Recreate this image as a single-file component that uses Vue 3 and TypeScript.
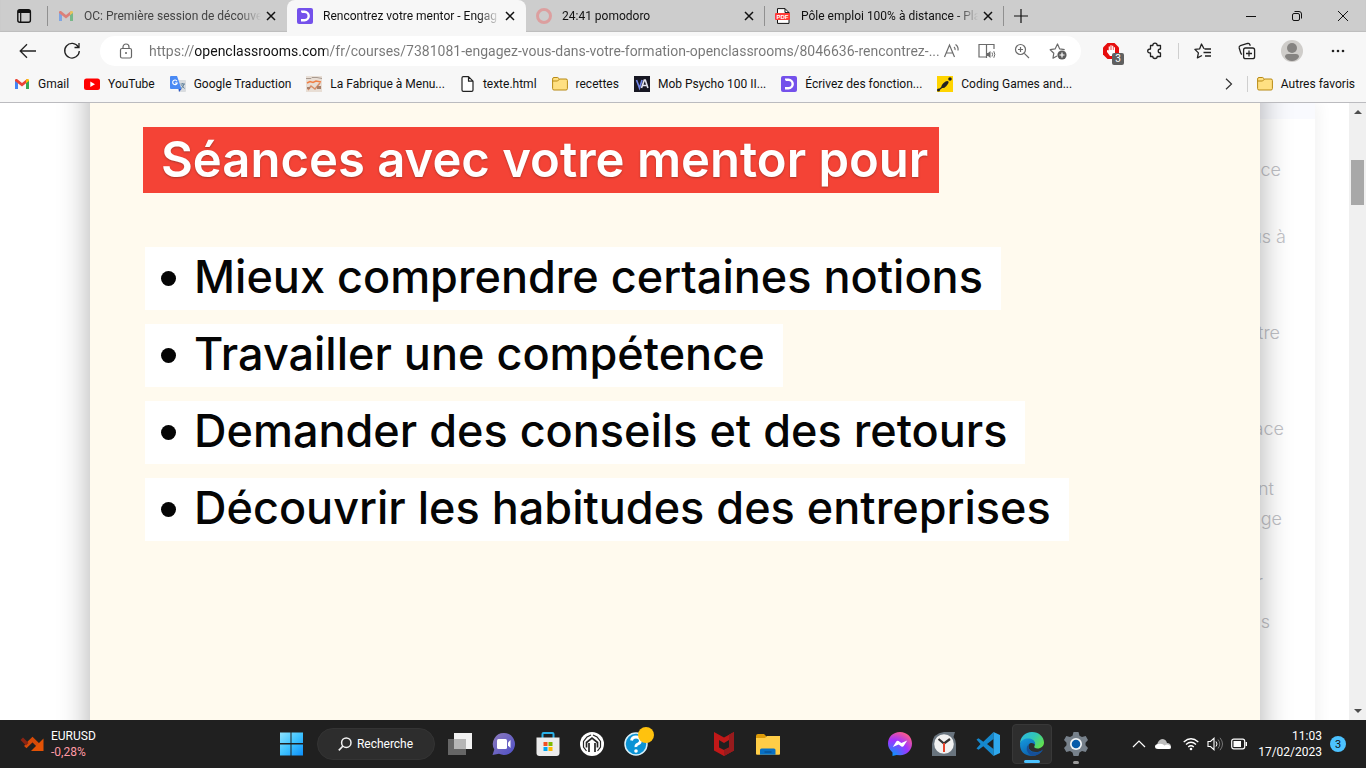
<script setup lang="ts">
import { ref } from 'vue'

interface Tab { title: string; icon: string; active?: boolean; faded?: boolean; sep?: boolean }
const tabs: Tab[] = [
  { title: 'OC: Première session de découve', icon: 'gmail', faded: true },
  { title: 'Rencontrez votre mentor - Engag', icon: 'oc', active: true },
  { title: '24:41 pomodoro', icon: 'ring', sep: true },
  { title: 'Pôle emploi 100% à distance - Pla', icon: 'pdf', sep: true },
]

const address = ref('https://openclassrooms.com/fr/courses/7381081-engagez-vous-dans-votre-formation-openclassrooms/8046636-rencontrez-...')

const favourites = [
  { label: 'Gmail', icon: 'gmail' },
  { label: 'YouTube', icon: 'youtube' },
  { label: 'Google Traduction', icon: 'translate' },
  { label: 'La Fabrique à Menu...', icon: 'menu' },
  { label: 'texte.html', icon: 'file' },
  { label: 'recettes', icon: 'folder' },
  { label: 'Mob Psycho 100 II...', icon: 'va' },
  { label: 'Écrivez des fonction...', icon: 'oc' },
  { label: 'Coding Games and...', icon: 'coding' },
]

const points = [
  'Mieux comprendre certaines notions',
  'Travailler une compétence',
  'Demander des conseils et des retours',
  'Découvrir les habitudes des entreprises',
]

const lesson = [
  { text: 'ce', before: 0, inset: 34 },
  { text: 'us à', before: 37, inset: 29 },
  { text: 'tre', before: 66, inset: 35 },
  { text: 'ace', before: 66, inset: 31 },
  { text: 'nt', before: 30, inset: 41 },
  { text: 'nge', before: 0, inset: 33 },
  { text: 'r', before: 33, inset: 52 },
  { text: 's', before: 10, inset: 45 },
]
</script>

<template>
  <div class="screen">
    <header class="browser">
      <div class="tabstrip">
        <button class="tabmenu" aria-label="Menu des onglets">
          <svg width="16" height="16" viewBox="0 0 16 16"><rect x="1.8" y="1.8" width="12.6" height="12.4" rx="2" fill="none" stroke="#111" stroke-width="1.4" /><path d="M2 2h12v3H2z" fill="#111" /><path d="M4.7 5v9" stroke="#111" stroke-width="1.2" /></svg>
        </button>
        <div v-for="t in tabs" :key="t.title" class="tab" :class="{ active: t.active, faded: t.faded, sep: t.sep }">
          <svg v-if="t.icon === 'gmail'" class="tabicon" width="16" height="16" viewBox="0 0 16 16"><path d="M1 4v9h3V7z" fill="#4285f4" /><path d="M12 7v6h3V4z" fill="#34a853" /><path d="M1 4.2Q1 2.500 3 3l5 4 5-4v3.600L8 10.500 1 5z" fill="#ea4335" /><path d="M12 4l1-1q2-.5 2 1.200V5l-3 2z" fill="#fbbc04" /></svg>
          <svg v-else-if="t.icon === 'oc'" class="tabicon" width="16" height="16" viewBox="0 0 16 16"><rect width="16" height="16" rx="2" fill="#7451eb" /><path d="M4 3.800h3.500a4.200 4.200 0 0 1 0 8.400H4" fill="none" stroke="#fff" stroke-width="2.400" /><path d="M3 2l3.500 5.500H3z" fill="#7451eb" /></svg>
          <svg v-else-if="t.icon === 'ring'" class="tabicon" width="16" height="16" viewBox="0 0 16 16"><circle cx="8" cy="8" r="6.500" fill="none" stroke="#dc9f9f" stroke-width="3" /></svg>
          <svg v-else class="tabicon" width="16" height="16" viewBox="0 0 16 16"><path d="M2.500.6h7.500l4 4v10.800H2.500z" fill="#fff" stroke="#111" /><path d="M10 .6v4h4" fill="none" stroke="#111" /><rect x="0" y="5" width="15" height="7" rx="1" fill="#ff3b36" /><text x="7.500" y="10.700" text-anchor="middle" font-family="Liberation Sans" font-weight="700" font-size="6" fill="#fff">PDF</text></svg>
          <span class="tabtitle">{{ t.title }}</span>
          <button class="close" aria-label="Fermer l’onglet"><svg width="10" height="10" viewBox="0 0 10 10"><path d="M1 1l8 8M9 1L1 9" stroke="#111" stroke-width="1.500" /></svg></button>
        </div>
        <button class="newtab" aria-label="Nouvel onglet"><svg width="14" height="14" viewBox="0 0 14 14"><path d="M7 0v14M0 7h14" stroke="#111" stroke-width="1.200" /></svg></button>
        <div class="winctl">
          <button aria-label="Réduire"><svg width="10" height="10" viewBox="0 0 10 10"><path d="M0 5.500h10" stroke="#111" /></svg></button>
          <button aria-label="Restaurer"><svg width="10" height="10" viewBox="0 0 10 10"><rect x=".5" y="2.500" width="7" height="7" rx="1.500" fill="none" stroke="#111" /><path d="M2.500.5H7Q9.500.5 9.500 3v4.500" fill="none" stroke="#111" /></svg></button>
          <button aria-label="Fermer"><svg width="10" height="10" viewBox="0 0 10 10"><path d="M0 0l10 10M10 0L0 10" stroke="#111" /></svg></button>
        </div>
      </div>

      <div class="toolbar">
        <button class="tool nav" aria-label="Précédent"><svg width="18" height="16" viewBox="0 0 18 16"><path d="M17 8H1.500M8 1.200L1.200 8 8 14.800" fill="none" stroke="#222" stroke-width="1.300" /></svg></button>
        <button class="tool nav" aria-label="Actualiser"><svg width="18" height="18" viewBox="0 0 18 18"><path d="M15.300 5A7.300 7.300 0 1 0 16.300 9M16 1v4.500h-4.500" fill="none" stroke="#222" stroke-width="1.300" /></svg></button>
        <div class="addressbar">
          <svg class="lock" width="14" height="16" viewBox="0 0 14 16"><rect x="1.500" y="5.500" width="11" height="9.500" rx="1.500" fill="none" stroke="#666" stroke-width="1.200" /><path d="M4 5.500V4a3 3 0 0 1 6 0v1.500" fill="none" stroke="#666" stroke-width="1.200" /><circle cx="7" cy="10" r="1" fill="#666" /></svg>
          <input v-model="address" class="url" type="text" aria-label="Adresse" spellcheck="false">
          <button class="mini" aria-label="Lecture à voix haute"><svg width="18" height="16" viewBox="0 0 18 16"><path d="M1.500 14L6.500 2l5 12M3.200 10h6.600M11 4q1.500 1.200 1 3M12.500 1.500q3.200 2.300 2.500 6" fill="none" stroke="#6b6b6b" stroke-width="1.200" /></svg></button>
          <button class="mini" aria-label="Lecteur immersif"><svg width="18" height="16" viewBox="0 0 18 16"><path d="M8.500 2.200V15M8.500 2.200V1.500h-7.500v12.500h7.500M8.500 1.500H16V6" fill="none" stroke="#6b6b6b" stroke-width="1.200" /><path d="M8.500 10v3h1.500l2.500 2V8L10 10z" fill="#6b6b6b" /><path d="M14 9.500q1.200 2 0 4M15.800 8.200q2 3.300 0 6.600" fill="none" stroke="#6b6b6b" /></svg></button>
          <button class="mini" aria-label="Zoom"><svg width="16" height="16" viewBox="0 0 16 16"><circle cx="6.500" cy="6.500" r="5" fill="none" stroke="#6b6b6b" stroke-width="1.200" /><path d="M10.300 10.300L15 15M4 6.500h5M6.500 4v5" stroke="#6b6b6b" stroke-width="1.200" /></svg></button>
          <button class="mini star" aria-label="Ajouter aux favoris"><svg width="18" height="18" viewBox="0 0 18 18"><path d="M8 14l-4 2.200.8-5L1.200 7.700l4.900-.8L8.500 2l2.200 4.900 5 .8" fill="none" stroke="#6b6b6b" stroke-width="1.200" stroke-linejoin="round" /><circle cx="13" cy="13" r="4.600" fill="#5c5c5c" /><path d="M10.500 13h5M13 10.500v5" stroke="#fff" stroke-width="1.200" /></svg></button>
        </div>
        <div class="extensions">
          <button class="tool" aria-label="Bloqueur de publicités, 3 éléments">
            <svg class="hand" width="18" height="18" viewBox="0 0 18 18"><path d="M5.500 1h7L17 5.500v7L12.500 17h-7L1 12.500v-7z" fill="#e60d0d" /><path d="M5 8.300l1.400-.3.300 1.500V4.500h1.200v3.500h.5V3.300h1.200V8h.5V3.800h1.200V8h.5V5.300H13v5.500L11.500 14H8L5 10z" fill="#fff" /></svg>
            <span class="count">3</span>
          </button>
          <button class="tool" aria-label="Extensions"><svg width="18" height="18" viewBox="0 0 18 18"><path d="M4.500 3.500h2.300q0-2.300 2.200-2.300t2.200 2.300h3.300V7q-2.300 0-2.300 2t2.300 2v3.500h-3.300q0 2-2.200 2t-2.200-2H4.500V11q-2.800 0-2.800-2t2.800-2z" fill="none" stroke="#222" stroke-width="1.300" stroke-linejoin="round" /></svg></button>
          <i class="rule"></i>
          <button class="tool" aria-label="Favoris"><svg width="18" height="18" viewBox="0 0 18 18"><path d="M10 6.800L7.500 2 5.600 6.900l-4.700.5 3.500 3.500-1 5L8 13.500M10.500 7H17M9.500 10.500H17M11 14h6" fill="none" stroke="#222" stroke-width="1.300" stroke-linejoin="round" /></svg></button>
          <button class="tool" aria-label="Collections"><svg width="18" height="18" viewBox="0 0 18 18"><rect x="5.600" y="6" width="11" height="10.700" rx="2" fill="none" stroke="#222" stroke-width="1.300" /><path d="M4 12.500Q3 12 2.600 10.500L1.200 6q-.4-1.800 1.200-2.400L9.500 1.500q1.500-.4 2.200.8l.6 1.500M11 8.500v6M8 11.500h6" fill="none" stroke="#222" stroke-width="1.300" /></svg></button>
          <button class="tool wide" aria-label="Profil"><svg width="22" height="22" viewBox="0 0 22 22"><circle cx="11" cy="11" r="11" fill="#cfcdca" /><circle cx="11" cy="8" r="5" fill="#858381" /><path d="M4 17q0-3 3-3h8q3 0 3 3-2.500 4-7 4t-7-4" fill="#858381" /></svg></button>
          <button class="tool wide" aria-label="Paramètres et plus"><svg width="14" height="4" viewBox="0 0 14 4"><circle cx="2" cy="2" r="1.300" fill="#222" /><circle cx="7" cy="2" r="1.300" fill="#222" /><circle cx="12" cy="2" r="1.300" fill="#222" /></svg></button>
        </div>
      </div>

      <nav class="favbar" aria-label="Favoris">
        <div class="favlist">
          <a v-for="f in favourites" :key="f.label" href="#" class="fav">
            <svg v-if="f.icon === 'gmail'" width="16" height="16" viewBox="0 0 16 16"><path d="M1 4v9h3V7z" fill="#4285f4" /><path d="M12 7v6h3V4z" fill="#34a853" /><path d="M1 4.200Q1 2.500 3 3l5 4 5-4v3.600L8 10.500 1 5z" fill="#ea4335" /><path d="M12 4l1-1q2-.5 2 1.200V5l-3 2z" fill="#fbbc04" /></svg>
            <svg v-else-if="f.icon === 'youtube'" width="16" height="16" viewBox="0 0 16 16"><rect y="2.500" width="16" height="11.500" rx="2.500" fill="#f00" /><path d="M6.300 5.500v5.500l4.700-2.750z" fill="#fff" /></svg>
            <svg v-else-if="f.icon === 'translate'" width="16" height="16" viewBox="0 0 16 16"><path d="M7 4h8q1 0 1 1v10q0 1-1 1H9z" fill="#d9dcdf" /><path d="M1 0h6l4.500 13H1q-1 0-1-1V1q0-1 1-1" fill="#4a8af4" /><path d="M8.500 13h3L9 16z" fill="#2a56c6" /><path d="M7 5.200A2.300 2.300 0 1 0 7.200 7H5" fill="none" stroke="#fff" stroke-width="1.100" /><path d="M10.500 8h4.500M12.700 7v1M14 8q-.7 3-3 4.500M11.500 9l3 3.500" stroke="#60809a" fill="none" /></svg>
            <svg v-else-if="f.icon === 'menu'" width="16" height="16" viewBox="0 0 16 16"><rect width="16" height="16" fill="#e8ded5" /><path d="M0 2.500h5l1-1h5l5 1" stroke="#a89a90" fill="none" /><path d="M1 7l3-1.500 3 1L10 5l5 1" stroke="#f07f45" stroke-width="1.500" fill="none" /><path d="M2 14l3-4 4 3 5-6" stroke="#d98d66" stroke-width="1.500" fill="none" /><path d="M11 10h4v3h-4zM1 11h3v2H1z" fill="#a9806a" /></svg>
            <svg v-else-if="f.icon === 'file'" width="15" height="16" viewBox="0 0 15 16"><path d="M2 2q0-1.300 1.300-1.300h5.200L13 5.200V14q0 1.300-1.300 1.300H3.300Q2 15.300 2 14zM8.500.7v4.500H13" fill="#fff" stroke="#222" stroke-width="1.200" stroke-linejoin="round" /></svg>
            <svg v-else-if="f.icon === 'folder'" width="16" height="16" viewBox="0 0 16 16"><path d="M.6 3Q.6 1.500 2 1.500h3.700L7.500 3H14q1.400 0 1.400 1.400v8.200Q15.400 14 14 14H2Q.6 14 .6 12.600z" fill="#ffe082" stroke="#b88a15" /><path d="M.6 5h5L7.500 3" fill="none" stroke="#b88a15" /></svg>
            <svg v-else-if="f.icon === 'va'" width="16" height="16" viewBox="0 0 16 16"><rect width="16" height="16" fill="#171723" /><path d="M2.500 4l3 8 2.600-8" fill="none" stroke="#7286e8" stroke-width="1.600" /><path d="M7.500 12l2.800-8h1l2.600 8M9 9.500h4" fill="none" stroke="#e4e4ef" stroke-width="1.600" /></svg>
            <svg v-else-if="f.icon === 'oc'" width="16" height="16" viewBox="0 0 16 16"><rect width="16" height="16" rx="2" fill="#7451eb" /><path d="M4 3.800h3.500a4.200 4.200 0 0 1 0 8.400H4" fill="none" stroke="#fff" stroke-width="2.400" /><path d="M3 2l3.500 5.500H3z" fill="#7451eb" /></svg>
            <svg v-else width="16" height="16" viewBox="0 0 16 16"><rect width="16" height="16" fill="#ffd400" /><path d="M1 14.500l5-4" stroke="#222" stroke-width="1.500" /><circle cx="1.500" cy="14" r="1.500" fill="#222" /><ellipse cx="8" cy="8.500" rx="4.500" ry="2" transform="rotate(-45 8 8.500)" fill="#222" /><circle cx="13" cy="3" r="1.800" fill="#222" /></svg>
            <span>{{ f.label }}</span>
          </a>
        </div>
        <button class="more" aria-label="Plus de favoris"><svg width="8" height="12" viewBox="0 0 8 12"><path d="M1 .7L6.500 6 1 11.300" fill="none" stroke="#333" stroke-width="1.200" /></svg></button>
        <i class="rule small"></i>
        <a href="#" class="fav other">
          <svg width="16" height="16" viewBox="0 0 16 16"><path d="M.6 3Q.6 1.500 2 1.500h3.700L7.500 3H14q1.400 0 1.400 1.400v8.200Q15.400 14 14 14H2Q.6 14 .6 12.600z" fill="#ffe082" stroke="#b88a15" /><path d="M.6 5h5L7.500 3" fill="none" stroke="#b88a15" /></svg>
          <span>Autres favoris</span>
        </a>
      </nav>
    </header>

    <div class="viewport">
      <div class="page">
        <div class="lesson" aria-hidden="true">
          <p v-for="l in lesson" :key="l.text" :style="{ marginTop: l.before + 'px', paddingRight: l.inset + 'px' }">{{ l.text }}</p>
        </div>
        <main class="slide">
          <h1>Séances avec votre mentor pour</h1>
          <ul>
            <li v-for="p in points" :key="p">{{ p }}</li>
          </ul>
        </main>
      </div>
      <div class="scrollbar">
        <svg width="8" height="4" viewBox="0 0 8 4"><path d="M0 4l4-4 4 4z" fill="#4d4d4d" /></svg>
        <i class="thumb"></i>
        <svg class="down" width="8" height="4" viewBox="0 0 8 4"><path d="M0 0l4 4 4-4z" fill="#4d4d4d" /></svg>
      </div>
    </div>

    <footer class="taskbar">
      <button class="widget">
        <svg width="24" height="16" viewBox="0 0 24 16"><path d="M5.500 8.500l1 1 6-6 6.500 6.500" fill="none" stroke="#d64a08" stroke-width="4" /><path d="M.500 4L3 1.500 8.500 7 6 9.500z" fill="#8a2413" /><path d="M23.500 2.500v12.500H11z" fill="#e35205" /></svg>
        <span class="quote"><span>EURUSD</span><span class="fall">-0,28%</span></span>
      </button>

      <div class="apps">
        <button class="slot" aria-label="Démarrer"><svg width="24" height="24" viewBox="0 0 24 24"><defs><linearGradient id="win" x1="0" y1="0" x2="1" y2="1"><stop offset="0" stop-color="#8fe3ff" /><stop offset=".5" stop-color="#3fc3ff" /><stop offset="1" stop-color="#0c8ffb" /></linearGradient></defs><path d="M1 .5h10.500V11H1zM12.500.5H24V11H12.500zM1 12.500h10.500V23.500H1zM12.500 12.500H24V23.500H12.500z" fill="url(#win)" /></svg></button>
        <button class="search"><svg width="14" height="14" viewBox="0 0 14 14"><circle cx="8.300" cy="5.700" r="4.700" fill="none" stroke="#f2f2f2" stroke-width="1.500" /><path d="M5 9L.8 13.300" stroke="#f2f2f2" stroke-width="1.700" /></svg><span>Recherche</span></button>
        <button class="slot" aria-label="Vue des tâches"><svg width="24" height="24" viewBox="0 0 24 24"><path d="M6 1h18v16H6z" fill="#f1f1f1" /><path d="M0 7h18v16H0z" fill="#666" /><path d="M6 7h12v10H6z" fill="#b5b5b5" /></svg></button>
        <button class="slot" aria-label="Conversation"><svg width="24" height="24" viewBox="0 0 24 24"><defs><linearGradient id="chat" x1="0" y1="0" x2="1" y2="1"><stop offset="0" stop-color="#8d7abb" /><stop offset="1" stop-color="#4d4fc8" /></linearGradient></defs><path d="M12 1a11 11 0 1 1-5 20.800L.5 23l1.800-5.500A11 11 0 0 1 12 1" fill="url(#chat)" /><rect x="5" y="7" width="10" height="10" rx="1.500" fill="#fff" /><path d="M16 10.500L18.500 8v8L16 13.500z" fill="#fff" /></svg></button>
        <button class="slot" aria-label="Microsoft Store"><svg width="24" height="24" viewBox="0 0 24 24"><path d="M6.500 7V2q0-1 1-1h9q1 0 1 1v5" fill="none" stroke="#2ab1e8" stroke-width="2" /><path d="M.5 5.500h23V21q0 3-3 3h-17q-3 0-3-3z" fill="#ececec" /><path d="M7.500 10H11.500v4h-4z" fill="#f25022" /><path d="M12.500 10h4v4h-4z" fill="#7fba00" /><path d="M7.500 15h4v4h-4z" fill="#00a4ef" /><path d="M12.500 15h4v4h-4z" fill="#ffb900" /></svg></button>
        <button class="slot" aria-label="PredatorSense"><svg width="24" height="24" viewBox="0 0 24 24"><circle cx="12" cy="12" r="12" fill="#fff" /><path d="M6.500 19L3.500 15V9.500L7 5l4-2M17.500 19l3-4V9.500L17 5l-4-2" fill="none" stroke="#252525" stroke-width="1.200" /><path d="M6.500 15.500v-5L12 6l5.500 4.500v5M9 20v-9M15 20v-9" fill="none" stroke="#252525" stroke-width="1.700" /></svg></button>
        <button class="slot" aria-label="Aide, notification">
          <svg width="24" height="24" viewBox="0 0 24 24"><circle cx="12" cy="12" r="11" fill="#0b93d5" stroke="#d9f0fa" stroke-width="1.500" /><path d="M7.500 8.500Q8 5 12 5t4.500 3.500Q16.500 11 14 12t-2 3" fill="none" stroke="#fff" stroke-width="2.800" /><circle cx="12" cy="19" r="1.800" fill="#fff" /></svg>
          <i class="dot"></i>
        </button>
        <i class="slot"></i>
        <button class="slot" aria-label="McAfee"><svg width="24" height="24" viewBox="0 0 24 24"><path d="M2 0l10 5.500L22 0v18.500L12 24 2 18.500z" fill="#c01818" /><path d="M7 8l5 3 5-3v7.500L12 18l-5-2.500z" fill="#202020" /><path d="M22 0v18.500L12 24v-6l5-2.500V2.700z" fill="#971b1d" /></svg></button>
        <button class="slot" aria-label="Explorateur de fichiers"><svg width="24" height="24" viewBox="0 0 24 24"><path d="M0 4q0-2 2-2h6l2.500 2.500V9H0z" fill="#dd9b08" /><path d="M0 6h9l2-2h13v18q0 .8-1 .8H1q-1 0-1-1z" fill="#ffcd47" /><path d="M4 22.800V18q0-1.500 1.500-1.500h12.500q1.500 0 1.500 1.500v4.800z" fill="#0870c4" /><path d="M8.500 20h7" stroke="#075499" stroke-width="1.500" /></svg></button>
        <i class="slot"></i>
        <i class="slot"></i>
        <button class="slot" aria-label="Messenger"><svg width="24" height="24" viewBox="0 0 24 24"><defs><radialGradient id="msg" cx=".2" cy="1" r="1.100"><stop offset="0" stop-color="#0099ff" /><stop offset=".6" stop-color="#a033ff" /><stop offset="1" stop-color="#ff5c87" /></radialGradient></defs><path d="M12 0c7 0 12 5 12 11.600S19 23.300 12 23.300l-3.500-.4L4.500 24v-3.600Q0 17 0 11.600C0 5 5 0 12 0" fill="url(#msg)" /><path d="M4.800 15l3.500-5.600q1-1.300 2.300-.4l2.800 2 5.800-2.600-3.500 5.600q-1 1.300-2.300.4l-2.800-2z" fill="#fff" /></svg></button>
        <button class="slot" aria-label="Horloge"><svg width="24" height="24" viewBox="0 0 24 24"><path d="M0 24V12Q1 1 12 0h11l-1.500 5Q24 8 24 12v12z" fill="#69747e" /><circle cx="12" cy="12" r="9.800" fill="#f1f1f1" /><path d="M6.500 7L12 11.500 18 7" fill="none" stroke="#333" stroke-width="2.200" /><path d="M12 11v9" stroke="#e6442c" stroke-width="2" /></svg></button>
        <button class="slot" aria-label="Visual Studio Code"><svg width="24" height="24" viewBox="0 0 24 24"><path d="M17.500 0L7.300 9.800 2.500 6.200.5 7.500l4 4.500-4 4.500 2 1.300 4.800-3.600L17.500 24V17l-6.500-5 6.500-5z" fill="#1588cd" /><path d="M17.500 0L24 3v18l-6.500 3z" fill="#2ea8ed" /></svg></button>
        <button class="slot open" aria-label="Microsoft Edge"><svg width="24" height="24" viewBox="0 0 24 24"><defs><linearGradient id="edgeTop" x1="0" y1="0" x2="1" y2=".6"><stop offset="0" stop-color="#2bb6e6" /><stop offset=".55" stop-color="#31c6b8" /><stop offset="1" stop-color="#5fdf52" /></linearGradient><linearGradient id="edgeLow" x1="0" y1="0" x2=".7" y2="1"><stop offset="0" stop-color="#149be0" /><stop offset="1" stop-color="#0c59a4" /></linearGradient></defs><path d="M0 12C0 5 5 0 12 0s12 5 12 10.500c0 3.500-3 6-6.500 6-2.500 0-4-1-3-2.500 2-3-1.500-6.500-5.500-6.500S1 9 0 12" fill="url(#edgeTop)" /><path d="M0 12C1 8 5 6 9.500 6.500c4 .5 6.500 4 5.500 6.500-1-2-4.500-3-6-.5-2 4 2 7.500 6.500 7.500 3 0 5-.5 7.500-2.500Q19 24 12 24 0 23.500 0 12" fill="url(#edgeLow)" /><path d="M9.500 11.500c-3 4 .5 9 6 9 2.500 0 5-.7 7.500-3Q19.500 24 12.500 24C6 21.500 5 15 9.500 11.500" fill="#164f98" /></svg><i class="run"></i></button>
        <button class="slot idle" aria-label="Paramètres"><svg width="24" height="24" viewBox="0 0 24 24"><path d="M9.500 0h5l1 3.700 2.500 1.400 3.700-1 2.300 4-2.500 2.700v2.500l2.500 2.700-2.300 4-3.700-1-2.500 1.400-1 3.600h-5l-1-3.600L6 19l-3.700 1L0 16l2.500-2.700v-2.600L0 8l2.300-4L6 5.100l2.500-1.400z" fill="#77818b" /><circle cx="12" cy="12" r="6" fill="#f3f5f6" /><circle cx="12" cy="12" r="4.300" fill="#075ba9" /></svg><i class="run"></i></button>
      </div>

      <div class="tray">
        <button class="t1" aria-label="Icônes cachées"><svg width="14" height="8" viewBox="0 0 14 8"><path d="M1 7l6-6 6 6" fill="none" stroke="#fff" stroke-width="1.200" /></svg></button>
        <button class="t2" aria-label="OneDrive"><svg width="16" height="12" viewBox="0 0 16 12"><path d="M2 7q1-5 5-6 4 0 5 4 4 0 4 4H0z" fill="#bcbcbc" /><path d="M3 11Q0 11 0 8.500T3.500 6q4-1 6 1.500Q12 6 14 7t2 2.500-2 1.500z" fill="#fff" /></svg></button>
        <button class="quick" aria-label="Réseau, son et batterie">
          <svg width="16" height="14" viewBox="0 0 16 14"><path d="M.7 5Q8-1.500 15.300 5M3 7.500q5-4.500 10 0M5.200 10q2.800-2.500 5.600 0" fill="none" stroke="#fff" stroke-width="1.300" /><circle cx="8" cy="12" r="1.300" fill="#fff" /></svg>
          <svg width="16" height="14" viewBox="0 0 16 14"><path d="M1 4.500v5h2.500L7 12.700V1.300L3.500 4.500z" fill="none" stroke="#fff" stroke-width="1.100" /><path d="M9 4.500q2 2.500 0 5" fill="none" stroke="#fff" /><path d="M11 2.500q3.500 4.500 0 9M13 .8q5 6.200 0 12.400" fill="none" stroke="#777" /></svg>
          <svg width="16" height="12" viewBox="0 0 16 12"><rect x=".7" y="1.200" width="13" height="9.600" rx="2" fill="none" stroke="#fff" stroke-width="1.200" /><rect x="2.500" y="3" width="7.500" height="6" fill="#fff" /><path d="M15.300 4v4" stroke="#fff" stroke-width="1.400" /></svg>
        </button>
        <button class="clock"><span>11:03</span><span>17/02/2023</span></button>
        <button class="notif" aria-label="3 notifications">3</button>
      </div>
    </footer>
  </div>
</template>

<style>
body { margin: 0; }
</style>

<style scoped>
.screen { display: flex; flex-direction: column; height: 100vh; overflow: hidden; font-family: Roboto, "Open Sans", sans-serif; font-size: 12px; color: #111; }
.screen * { box-sizing: border-box; }
button { border: 0; background: none; padding: 0; margin: 0; font: inherit; color: inherit; display: flex; align-items: center; justify-content: center; }
svg { flex: none; display: block; }
i { display: block; flex: none; }

.browser { flex: none; background: #f7f7f7; border-bottom: 1px solid #bbbbbf; }
.tabstrip { display: flex; height: 32px; background: #cdcdcd; box-shadow: inset 0 -1px 1px #bdbdbd; }
.tabmenu { width: 48px; border-right: 1px solid #909090; height: 20px; align-self: center; }
.tab { display: flex; align-items: center; flex: 0 1 239px; min-width: 0; padding: 0 4px 0 10px; position: relative; }
.tab.active { background: #f7f7f7; border-radius: 8px 8px 0 0; }
.tab.sep::after { content: ""; width: 1px; height: 20px; background: #909090; position: absolute; right: 0; top: 6px; }
.tab.faded .tabicon { opacity: .55; }
.tab.faded .tabtitle { color: #444; }
.tabtitle { flex: 1; min-width: 0; margin: 0 -6px 0 10px; white-space: nowrap; overflow: hidden; mask-image: linear-gradient(to left, transparent 4px, #000 26px); }
.close { width: 24px; height: 24px; }
.newtab { width: 34px; }
.winctl { display: flex; margin-left: auto; }
.winctl button { width: 46px; }

.toolbar { display: flex; align-items: center; height: 38px; padding-left: 6px; }
.tool { width: 44px; height: 30px; position: relative; }
.tool.wide { width: 46px; }
.addressbar { display: flex; align-items: center; flex: 1; min-width: 0; height: 30px; margin-left: 6px; padding: 0 5px 0 19px; background: #fff; border-radius: 15px; }
.url { flex: 1; min-width: 0; height: 24px; margin: 0 -6px 0 16px; padding: 0; border: 0; outline: 0; font: inherit; font-size: 14px; color: transparent; background: linear-gradient(90deg, #767676 46px, #111 46px, #111 176px, #767676 176px); background-clip: text; -webkit-background-clip: text; text-overflow: clip; }
.mini { width: 35px; height: 28px; }
.star { width: 37px; }
.extensions { display: flex; align-items: center; padding: 0 5px 0 8px; }
.count { position: absolute; right: 9px; bottom: 1px; width: 12px; height: 12px; border-radius: 2px; background: #606060; color: #fff; font-size: 10px; line-height: 12px; text-align: center; }
.rule { width: 1px; height: 16px; background: #cfcfcf; margin: 0 2px 0 1px; }

.favbar { display: flex; align-items: center; height: 32px; padding: 0 11px 4px 14px; }
.favlist { display: flex; gap: 15px; flex: 1; min-width: 0; }
.fav { display: flex; align-items: center; gap: 8px; color: inherit; text-decoration: none; white-space: nowrap; }
.more { width: 24px; height: 24px; }
.rule.small { margin: 0 9px 0 6px; }

.viewport { display: flex; flex: 1; min-height: 0; }
.page { flex: 1; min-width: 0; position: relative; overflow: hidden; background: #fff; display: flex; }
.lesson { position: absolute; top: 0; bottom: -20px; right: 34px; width: 200px; padding-top: 36px; box-shadow: 4px 0 14px #f3f3f3; border-top: 16px solid #f9fafe; }
.lesson p { margin: 0; font-family: Inter, sans-serif; font-weight: 300; font-size: 18px; line-height: 30px; text-align: right; color: #bfc1c6; }
.slide { position: relative; flex: 1; min-width: 0; margin: -40px 89px -40px 90px; padding: 64px 53px; background: #fffaee; box-shadow: 0 0 30px rgba(0, 0, 0, .32); font-family: Inter, sans-serif; }
h1 { width: fit-content; margin: 0; padding: 0 11px 0 18px; background: #f44336; color: #fff; font-size: 49px; line-height: 66px; font-weight: 600; white-space: nowrap; text-shadow: 0 1px 2px rgba(90, 40, 30, .5); }
ul { list-style: none; margin: 54px 0 0; padding: 0 0 0 2px; display: flex; flex-direction: column; align-items: flex-start; gap: 14px; }
li { display: flex; align-items: center; padding: 0 18px 3px 16px; background: #fff; color: #050505; font-size: 45px; font-weight: 500; line-height: 60px; white-space: nowrap; }
li::before { content: ""; width: 15px; height: 15px; margin: 3px 18px 0 0; border-radius: 50%; background: #050505; }

.scrollbar { flex: none; width: 17px; background: #f0f0f0; display: flex; flex-direction: column; align-items: center; padding: 7px 0; }
.thumb { width: 13px; height: 45px; margin-top: 46px; background: #a8a8a8; }
.down { margin-top: auto; }

.taskbar { flex: none; height: 48px; display: grid; grid-template-columns: 1fr auto 1fr; background: #202020; color: #fff; }
.widget { justify-self: start; gap: 7px; padding-left: 20px; }
.quote { display: flex; flex-direction: column; align-items: flex-start; line-height: 16px; }
.fall { color: #ff99a4; }
.apps { display: flex; align-items: center; }
.slot { width: 44px; height: 48px; position: relative; }
.search { width: 118px; height: 32px; margin: 0 3px 0 4px; gap: 5px; border-radius: 16px; background: #2d2d2d; border: 1px solid #343434; }
.dot { position: absolute; left: 24px; top: 7px; width: 16px; height: 16px; border-radius: 50%; background: #ffc20e; }
.open { width: 40px; height: 40px; margin: 0 2px; border-radius: 4px; background: #2e2e2e; border: 1px solid #383838; }
.run { position: absolute; left: 50%; bottom: 0; width: 16px; height: 3px; margin-left: -8px; border-radius: 2px; background: #4cc2ff; }
.idle .run { width: 6px; margin-left: -3px; bottom: 4px; background: #9a9a9a; }
.tray { display: flex; align-items: center; justify-self: end; padding-right: 20px; }
.t1 { width: 24px; height: 40px; }
.t2 { width: 24px; height: 40px; }
.quick { gap: 8px; padding: 0 8px; height: 40px; }
.clock { flex-direction: column; align-items: flex-end; line-height: 16px; padding-left: 3px; }
.notif { width: 16px; height: 16px; margin-left: 8px; border-radius: 50%; background: #4cc2ff; color: #111; font-size: 11px; }
</style>
